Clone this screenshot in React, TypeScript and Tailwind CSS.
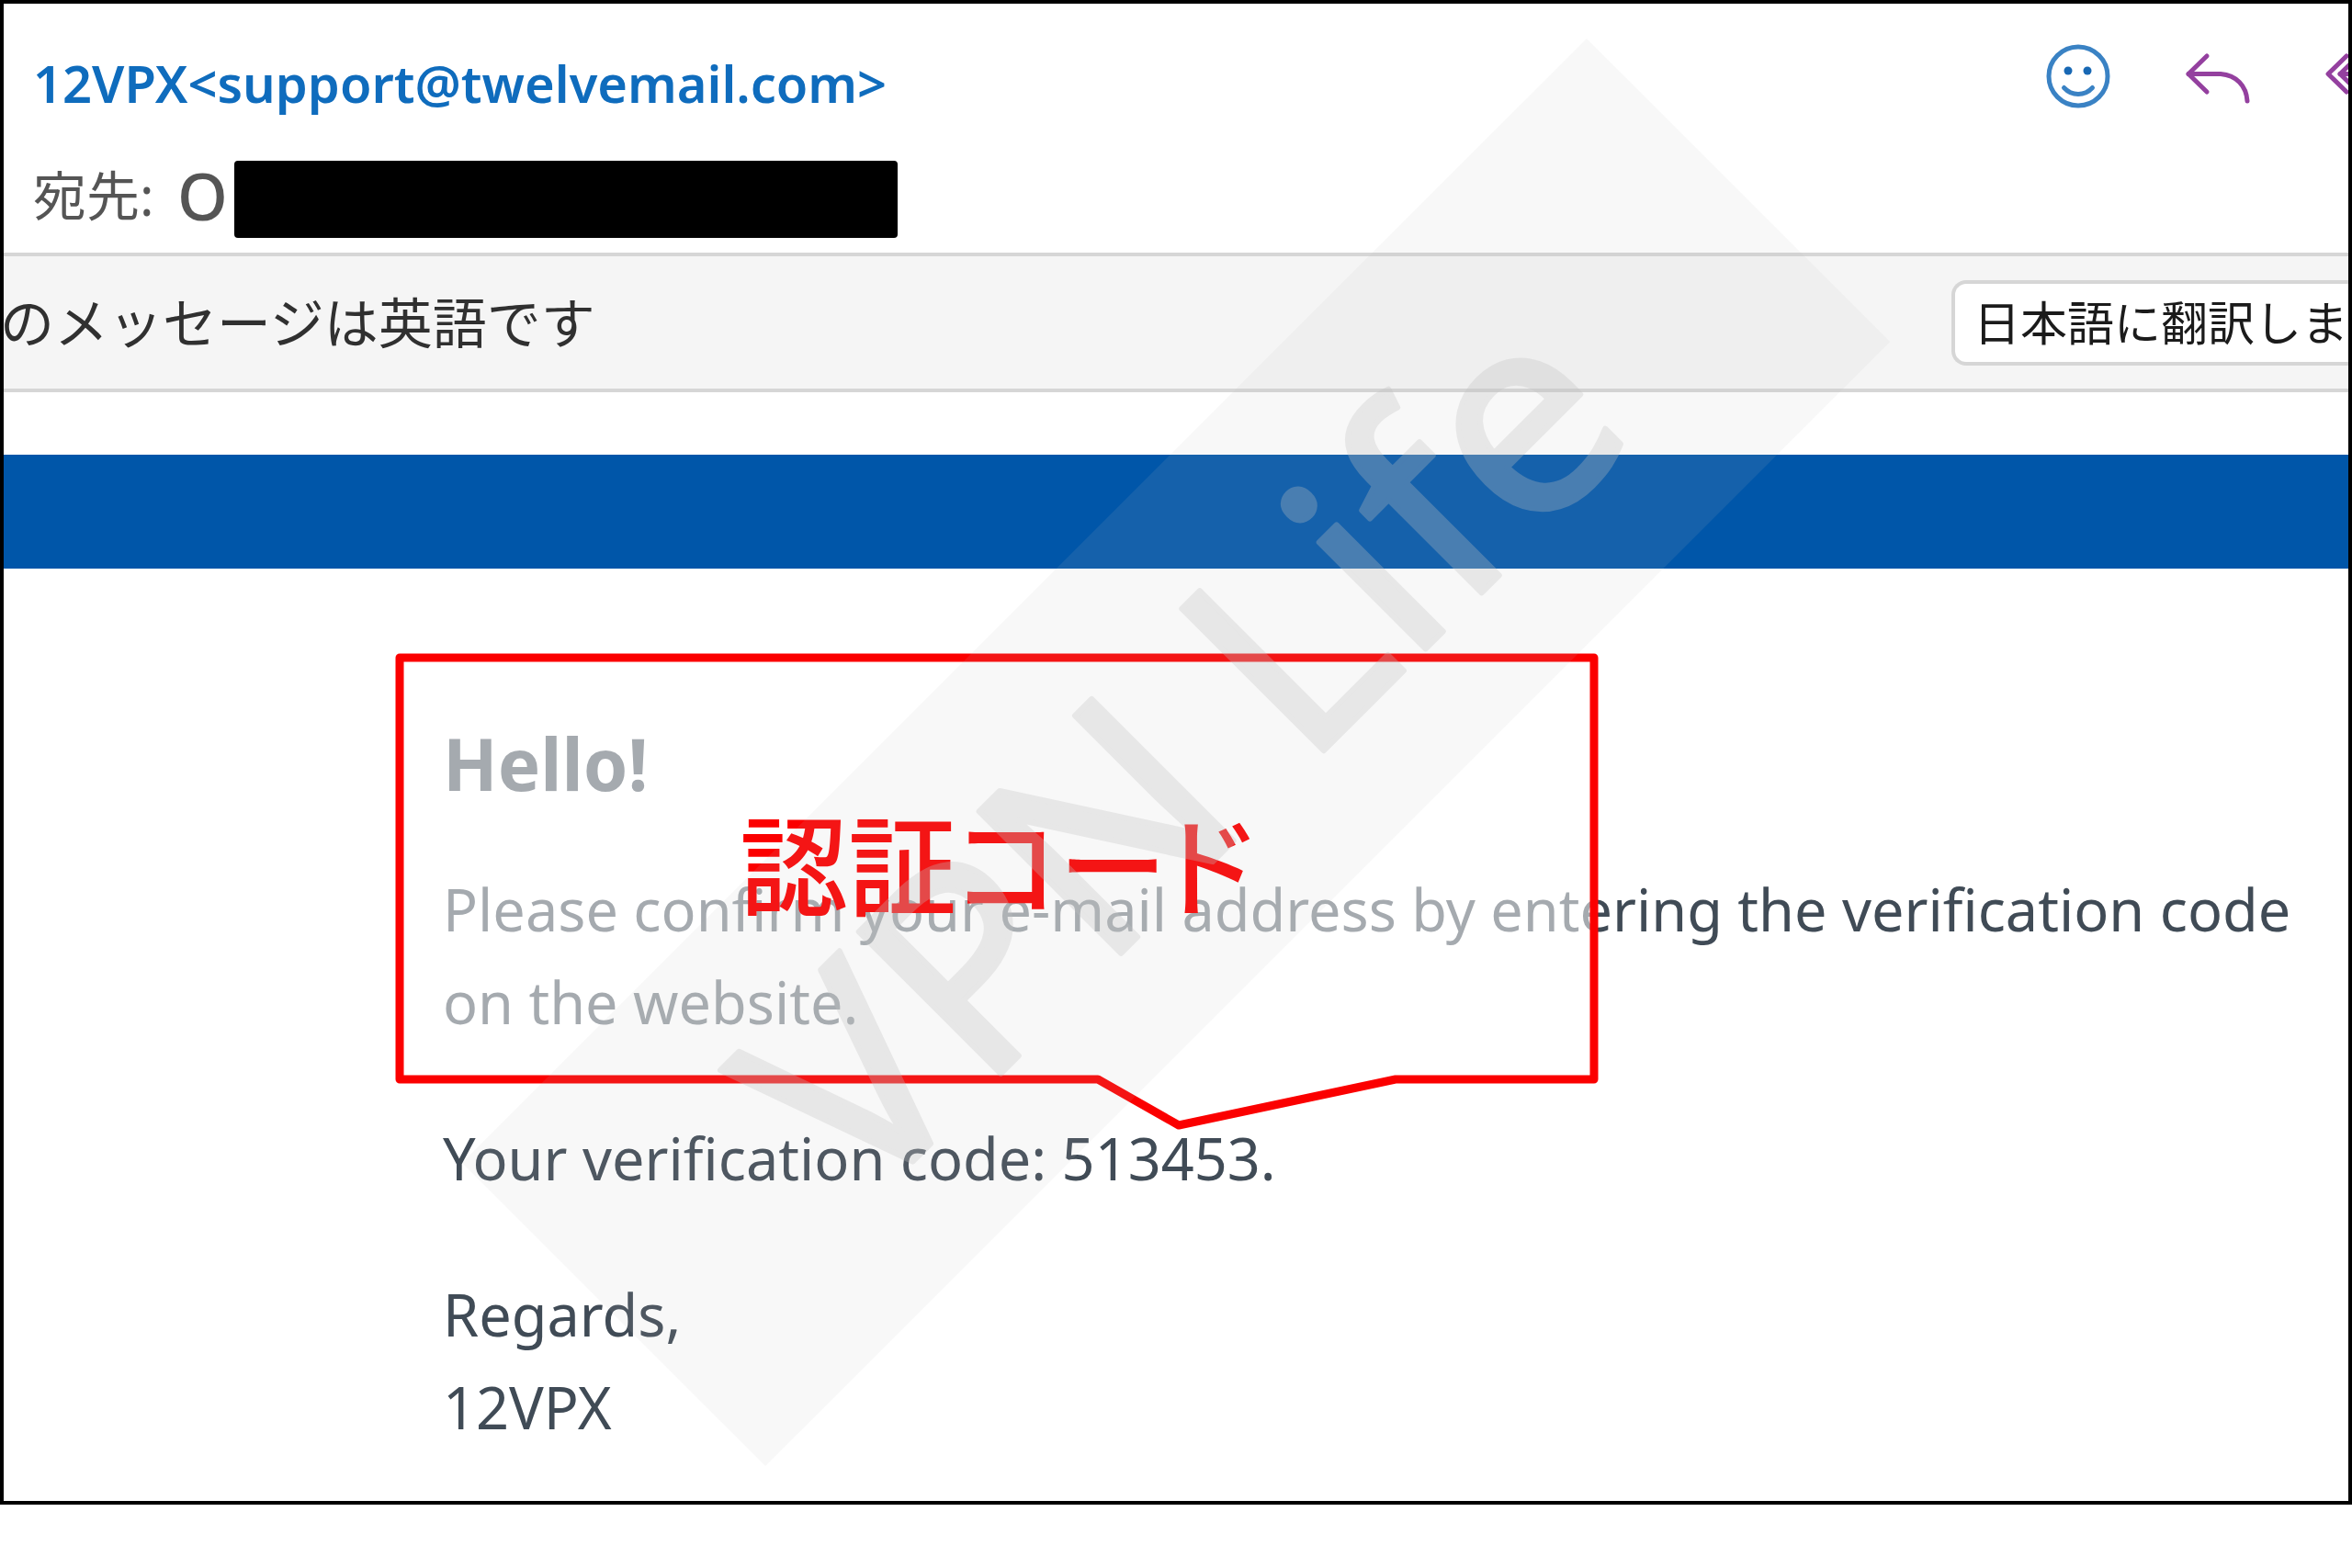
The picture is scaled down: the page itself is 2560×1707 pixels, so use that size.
import { type ReactNode } from "react"

const iconProps = {
    viewBox: "0 0 72 72",
    fill: "none",
    strokeWidth: 5,
    strokeLinecap: "round" as const,
    strokeLinejoin: "round" as const,
    className: "h-[72px] w-[72px]",
}

function SmileIcon() {
    return (
        <svg {...iconProps} stroke="#3a82c4">
            <circle cx="36" cy="36" r="32" />
            <circle cx="25" cy="30" r="4.5" fill="#1868b4" stroke="none" />
            <circle cx="46" cy="30" r="4.5" fill="#1868b4" stroke="none" />
            <path d="M20.500 48.500Q27 55.500 36 55.500T51.500 48.500" />
        </svg>
    )
}

function ReplyIcon() {
    return (
        <svg {...iconProps} stroke="#94409f">
            <path d="M24 14L4 33.500L24 53" />
            <path d="M4 33.500H39C56 35 67 46 68 63" />
        </svg>
    )
}

function ReplyAllIcon() {
    return (
        <svg {...iconProps} stroke="#94409f">
            <path d="M24 14L4 33.500L24 53" />
            <path d="M34 17L17 33.500L34 50" />
            <path d="M17 33.500H42C58 35 67 46 68 63" />
        </svg>
    )
}

const actions = [
    { name: "リアクション", icon: SmileIcon },
    { name: "返信", icon: ReplyIcon },
    { name: "全員に返信", icon: ReplyAllIcon },
]

function Paragraph({ children }: { children: ReactNode }) {
    return <p className="text-[63px] leading-[101px] whitespace-nowrap">{children}</p>
}

function Callout() {
    return (
        <div className="absolute top-[703px] left-[423px] h-[528px] w-[1314px]">
            <svg viewBox="0 0 1314 528" className="h-full w-full">
                <path
                    d="M8 9H1308V468H1092L856 518L768 468H8Z"
                    fill="#ffffff"
                    fillOpacity="0.53"
                    stroke="#fb0000"
                    strokeWidth="9"
                    strokeLinejoin="round"
                />
            </svg>
            <div className="absolute inset-x-0 top-0 flex h-[472px] items-center justify-center text-[118px] leading-none font-medium text-[#fb0000] [font-feature-settings:'palt']">
                認証コード
            </div>
        </div>
    )
}

function Watermark() {
    return (
        <div className="pointer-events-none absolute top-1/2 left-1/2 h-[467px] w-[1731px] -translate-1/2 -rotate-45 bg-[#c1c1c1]/11">
            <svg viewBox="0 0 1731 467" className="h-full w-full opacity-30">
                <text
                    x="869"
                    y="346"
                    textAnchor="middle"
                    fontFamily="Noto Sans, sans-serif"
                    fontSize="306"
                    fill="#c1c1c1"
                    stroke="#c1c1c1"
                    strokeWidth="6"
                    strokeLinejoin="round"
                >
                    VPN Life
                </text>
            </svg>
        </div>
    )
}

export default function App() {
    return (
        <div className="min-h-screen bg-white font-['Noto_Sans','Noto_Sans_CJK_JP',sans-serif]">
            <div className="relative overflow-hidden border-4 border-black bg-white">
                <header className="flex h-[271px] justify-between pl-8">
                    <div className="flex flex-col">
                        <a
                            href="mailto:support@twelvemail.com"
                            className="mt-10 text-[56px] leading-[92px] font-semibold whitespace-nowrap text-[#0f6cbd]"
                        >
                            12VPX&lt;support@twelvemail.com&gt;
                        </a>
                        <div className="mt-[39px] flex items-start text-[58px] leading-[76px] text-[#555555]">
                            <span className="w-[157px]">宛先:</span>
                            <span className="w-[62px] text-[70px] font-medium">O</span>
                            <span className="h-[84px] w-[722px] rounded bg-black" />
                        </div>
                    </div>
                    <div className="mt-[43px] flex h-[72px] w-[330px] gap-20 overflow-hidden">
                        {actions.map((item) => (
                            <button key={item.name} type="button" aria-label={item.name} className="shrink-0">
                                <item.icon />
                            </button>
                        ))}
                    </div>
                </header>

                <div className="flex h-[152px] items-center justify-between border-y-4 border-[#d6d6d6] bg-[#f5f5f5]">
                    <span className="-ml-1 text-[59px] leading-none text-[#303030]">のメッセージは英語です</span>
                    <button
                        type="button"
                        className="h-[93px] w-[432px] overflow-hidden rounded-l-2xl border-4 border-r-0 border-[#d6d6d6] bg-white pl-5 text-left text-[51px] leading-none whitespace-nowrap text-[#1b1b1b]"
                    >
                        日本語に翻訳しま
                    </button>
                </div>

                <div className="mt-[68px] h-[124px] bg-[#0056a9]" />

                <main className="flex flex-col gap-[69px] pt-[160px] pb-[52px] pl-[478px] text-[#404b56]">
                    <div className="flex flex-col gap-14">
                        <h1 className="text-[78px] leading-[104px] font-bold">Hello!</h1>
                        <Paragraph>
                            Please confirm your e-mail address by entering the verification code
                            <br />
                            on the website.
                        </Paragraph>
                    </div>
                    <Paragraph>Your verification code: 513453.</Paragraph>
                    <Paragraph>
                        Regards,
                        <br />
                        12VPX
                    </Paragraph>
                </main>

                <Callout />
                <Watermark />
            </div>
        </div>
    )
}
